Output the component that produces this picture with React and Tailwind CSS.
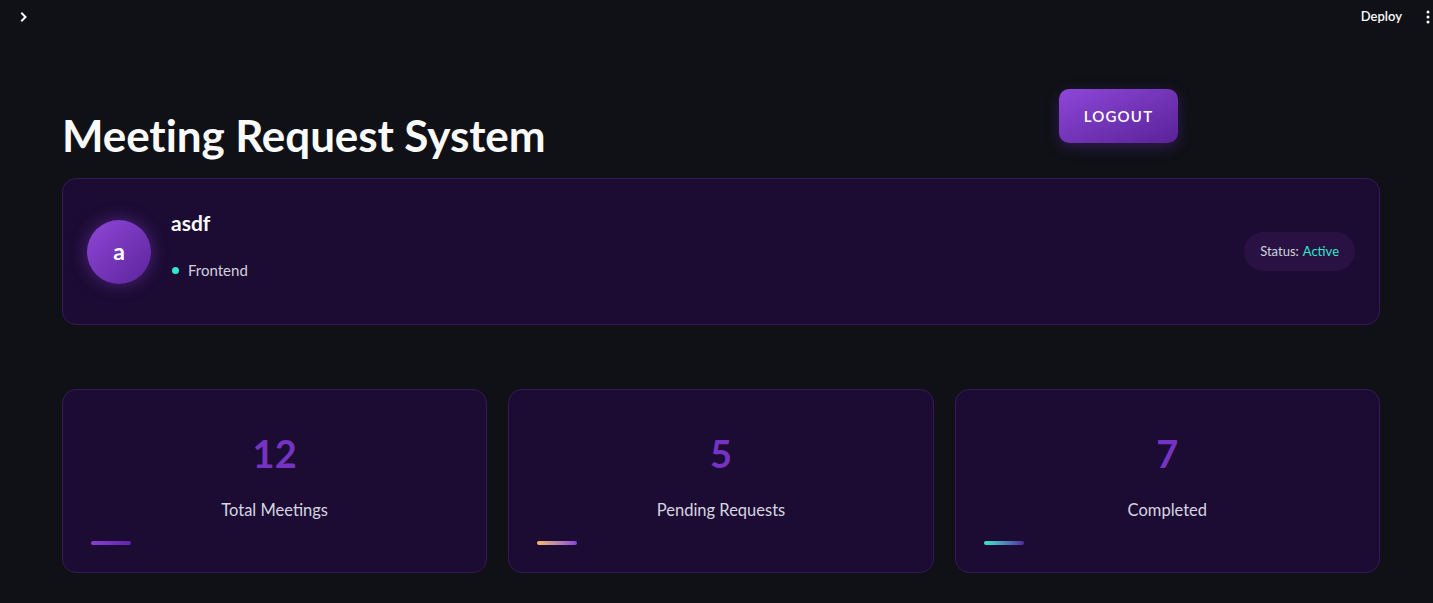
const stats = [
  { value: "12", label: "Total Meetings", bar: "bg-gradient-to-r from-[#8a3fd6] to-[#5f25a8]" },
  { value: "5", label: "Pending Requests", bar: "bg-gradient-to-r from-[#f6bb5f] to-[#8a3fd6]" },
  { value: "7", label: "Completed", bar: "bg-gradient-to-r from-[#2fe8cb] to-[#4b2a9c]" },
];

const App = () => {
  return (
    <div className="min-h-[603px] w-full bg-[#0f1116] text-white font-['Lato','Noto_Sans',sans-serif]">
      <div className="flex h-[32px] items-center justify-between pl-[18px] pr-[3px]">
        <svg width="12" height="12" viewBox="0 0 12 12" className="mt-[1px]">
          <path d="M4 2.5 L7.5 6 L4 9.5" fill="none" stroke="#fafafa" strokeWidth="2" strokeLinecap="square" />
        </svg>
        <div className="flex items-center gap-[24px] pt-[1px]">
          <span className="text-[13px] font-semibold text-[#fafafa]">Deploy</span>
          <svg width="4" height="14" viewBox="0 0 4 14">
            <circle cx="2" cy="2" r="1.5" fill="#fafafa" />
            <circle cx="2" cy="7" r="1.5" fill="#fafafa" />
            <circle cx="2" cy="12" r="1.5" fill="#fafafa" />
          </svg>
        </div>
      </div>

      <div className="px-[62px] pr-[53px]">
        <div className="flex items-start">
          <h1 className="mt-[76px] w-[997px] text-[44px] font-bold leading-[54px] tracking-[-0.1px] text-[#fafafa]">
            Meeting Request System
          </h1>
          <button className="mt-[57px] h-[54px] w-[119px] rounded-[10px] bg-gradient-to-br from-[#8e47d9] to-[#5a2298] text-[15px] font-semibold tracking-[1.2px] text-white shadow-[0_4px_14px_rgba(110,45,190,0.35)]">
            LOGOUT
          </button>
        </div>

        <div className="mt-[16px] flex h-[147px] items-center justify-between rounded-[14px] border border-[#361a57] bg-[#1c0b33] pl-[24px] pr-[24px]">
          <div className="flex items-center gap-[20px]">
            <div className="flex h-[64px] w-[64px] items-center justify-center rounded-full bg-gradient-to-br from-[#9047d8] to-[#5c249c] text-[23px] font-bold text-white shadow-[0_0_18px_rgba(140,70,220,0.45)]">
              a
            </div>
            <div className="flex flex-col">
              <span className="mt-[-12px] text-[21px] font-bold leading-[26px] text-[#fafafa]">asdf</span>
              <div className="mt-[23px] flex items-center gap-[9px] pl-[1px]">
                <span className="h-[7px] w-[7px] rounded-full bg-[#2fe8cb]" />
                <span className="text-[15px] text-[#d2d2dc]">Frontend</span>
              </div>
            </div>
          </div>
          <div className="flex h-[39px] items-center rounded-full bg-[#291243] px-[16px] text-[13px]">
            <span className="text-[#d2d2dc]">Status:</span>
            <span className="ml-[4px] text-[#2fe8cb]">Active</span>
          </div>
        </div>

        <div className="mt-[64px] grid grid-cols-3 gap-[21px]">
          {stats.map((s) => (
            <div
              key={s.label}
              className="flex h-[184px] flex-col rounded-[14px] border border-[#361a57] bg-[#1c0b33] px-[28px]"
            >
              <div className="mt-[39px] text-center text-[38px] font-bold leading-[48px] text-[#7433c2]">{s.value}</div>
              <div className="mt-[21px] text-center text-[16.5px] leading-[24px] text-[#d6d6e0]">{s.label}</div>
              <div className={`mt-[19px] h-[4px] w-[40px] rounded-full ${s.bar}`} />
            </div>
          ))}
        </div>
      </div>
    </div>
  );
};

export default App;
